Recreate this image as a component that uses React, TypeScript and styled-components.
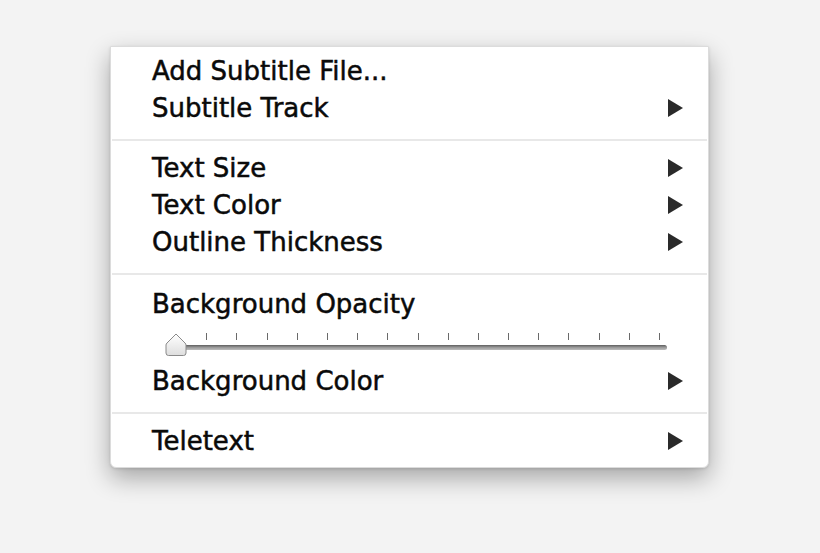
import styled, { createGlobalStyle } from 'styled-components';

const GlobalStyle = createGlobalStyle`
  html, body {
    margin: 0;
    padding: 0;
    background: #f3f3f3;
  }
  body {
    font-family: "DejaVu Sans", "Noto Sans", sans-serif;
  }
`;

const Page = styled.div`
  width: 820px;
  height: 553px;
  padding: 46px 0 0 110px;
  box-sizing: border-box;
`;

const Menu = styled.div`
  width: 599px;
  box-sizing: border-box;
  background: #ffffff;
  border: 1px solid #dcdcdc;
  border-radius: 0 0 6px 6px;
  padding: 5px 0 8px;
  box-shadow: 0 10px 24px rgba(0, 0, 0, 0.32), 0 1px 3px rgba(0, 0, 0, 0.12);
`;

const Item = styled.div<{ $padTop?: number }>`
  display: flex;
  align-items: center;
  justify-content: space-between;
  height: 37px;
  padding: ${({ $padTop }) => $padTop ?? 0}px 25px 0 41px;
  font-size: 26px;
  color: #0a0a0a;
  -webkit-text-stroke: 0.5px #0a0a0a;
  white-space: nowrap;
`;

const Arrow = styled.span`
  width: 0;
  height: 0;
  border-top: 9px solid transparent;
  border-bottom: 9px solid transparent;
  border-left: 15px solid #2a2a2a;
`;

const Separator = styled.div`
  height: 23px;
  padding: 13px 1px 0;
  box-sizing: border-box;
  &::after {
    content: '';
    display: block;
    height: 2px;
    background: #e8e8e8;
  }
`;

const SliderRow = styled.div`
  position: relative;
  height: 40px;
  margin: 0 41px 0 55px;
`;

const Ticks = styled.div`
  position: absolute;
  left: 10px;
  right: 7px;
  top: 11px;
  display: flex;
  justify-content: space-between;
`;

const Tick = styled.span`
  width: 1px;
  height: 7px;
  background: #6a6a6a;
`;

const Track = styled.div`
  position: absolute;
  left: 0;
  right: 0;
  top: 23px;
  height: 5px;
  border-radius: 3px;
  background: linear-gradient(#5e5e5e, #9a9a9a 50%, #bdbdbd);
  box-shadow: 0 1px 0 rgba(255, 255, 255, 0.8);
`;

const Knob = styled.svg`
  position: absolute;
  left: -1px;
  top: 11px;
`;

const ticks = Array.from({ length: 17 });

export default function App() {
  return (
    <Page>
      <GlobalStyle />
      <Menu>
        <Item>Add Subtitle File...</Item>
        <Item>
          Subtitle Track
          <Arrow />
        </Item>
        <Separator />
        <Item>
          Text Size
          <Arrow />
        </Item>
        <Item>
          Text Color
          <Arrow />
        </Item>
        <Item>
          Outline Thickness
          <Arrow />
        </Item>
        <Separator />
        <Item $padTop={2}>Background Opacity</Item>
        <SliderRow>
          <Ticks>
            {ticks.map((_, i) => (
              <Tick key={i} style={{ visibility: i === 0 ? 'hidden' : 'visible' }} />
            ))}
          </Ticks>
          <Track />
          <Knob width="22" height="24" viewBox="0 0 22 24">
            <defs>
              <linearGradient id="knobFill" x1="0" y1="0" x2="0" y2="1">
                <stop offset="0" stopColor="#ffffff" />
                <stop offset="1" stopColor="#dedede" />
              </linearGradient>
            </defs>
            <path
              d="M11 1 L20 10 Q21 11 21 12 L21 20 Q21 22.5 18.5 22.5 L3.5 22.5 Q1 22.5 1 20 L1 12 Q1 11 2 10 Z"
              fill="url(#knobFill)"
              stroke="#8a8a8a"
              strokeWidth="1"
            />
          </Knob>
        </SliderRow>
        <Item>
          Background Color
          <Arrow />
        </Item>
        <Separator />
        <Item>
          Teletext
          <Arrow />
        </Item>
      </Menu>
    </Page>
  );
}
